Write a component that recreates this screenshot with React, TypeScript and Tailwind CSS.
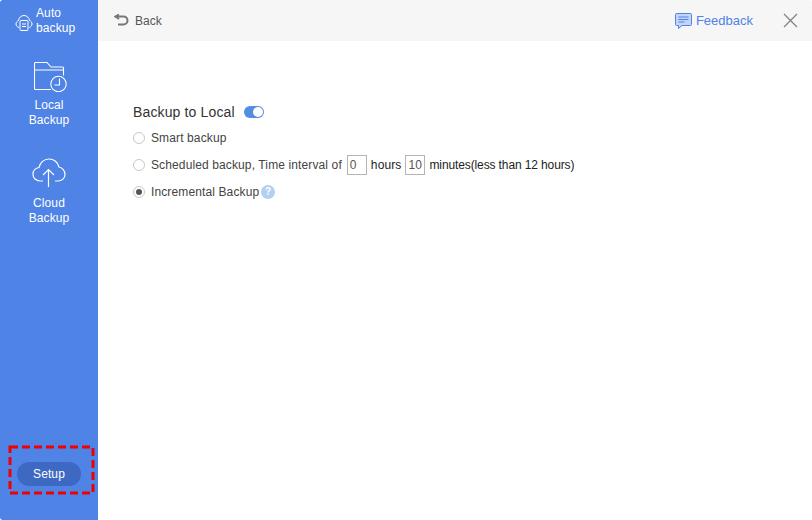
const font = "font-['Liberation_Sans',Arial,sans-serif]"

function AutoIcon() {
	return (
		<svg width="18" height="18" viewBox="0 0 18 18" fill="none" stroke="#fff" strokeWidth="1">
			<path d="M4 14.500C2 14 1 12.500 1 11 1 9.300 2.200 8 3.500 7.600 3.900 4.500 6.200 2.500 9 2.500c2.800 0 5 2 5.500 5 1.500.5 2.500 1.800 2.500 3.500 0 1.500-1 3-2.700 3.500" />
			<rect x="5" y="7.500" width="8" height="10" rx="1" />
			<path d="M7 11h4M7 13.500h4" />
		</svg>
	)
}

function FolderClockIcon() {
	return (
		<svg width="33" height="30" viewBox="0 0 33 30" fill="none" stroke="#fff" strokeWidth="1.100">
			<path d="M17 27.500H1.500a1 1 0 0 1-1-1V1.500a1 1 0 0 1 1-1h11.500l4 4.500h11.500a1 1 0 0 1 1 1v7.500" />
			<path d="M.5 8h29" />
			<circle cx="24.500" cy="22" r="7.700" />
			<path d="M25.500 16.500v6.500h-5" />
		</svg>
	)
}

function CloudUpIcon() {
	return (
		<svg width="34" height="29" viewBox="0 0 34 29" fill="none" stroke="#fff" strokeWidth="1.200">
			<path d="M11 23H8C4 23 1 20 1 16.300c0-3.500 2.600-6.300 6-6.800C8 4.500 12 1 17 1c5 0 9 3.500 10 8 3.400.5 6 3.800 6 7.500 0 3.700-3 6.500-7 6.500h-3" />
			<path d="M16.500 29V11.500M11 17l5.500-5.500L22 17" />
		</svg>
	)
}

function FeedbackIcon() {
	return (
		<svg width="17" height="16" viewBox="0 0 17 16" fill="none">
			<path d="M1.500.5h14a1 1 0 0 1 1 1v10a1 1 0 0 1-1 1H7l-3.500 3v-3H1.500a1 1 0 0 1-1-1v-10a1 1 0 0 1 1-1z" fill="#c3d5f7" stroke="#4f83e6" />
			<path d="M3.500 4h10M3.500 6.500h10M3.500 9h6" stroke="#4f83e6" />
		</svg>
	)
}

function Radio({ checked = false }: { checked?: boolean }) {
	return (
		<span className="flex h-3 w-3 shrink-0 items-center justify-center rounded-full border border-[#c8c8c8] bg-white">
			{checked && <span className="h-1.5 w-1.5 rounded-full bg-[#555]" />}
		</span>
	)
}

function NumBox({ value }: { value: string }) {
	return (
		<span className="flex h-5 w-5 items-center border border-[#b4b4b4] pl-[2px] text-xs text-[#555]">{value}</span>
	)
}

export default function App() {
	return (
		<div className={`relative flex h-[520px] w-[812px] overflow-hidden rounded-[3px] bg-white ${font}`}>
			{/* Sidebar */}
			<aside className="flex w-[98px] shrink-0 flex-col items-center bg-[#4f83e6] text-xs tracking-[0.1px] text-white">
				<div className="flex h-[42px] w-full items-center pl-[15px]">
					<span className="mt-[2px]">
						<AutoIcon />
					</span>
					<span className="ml-[3px] leading-[15px]">
						Auto
						<br />
						backup
					</span>
				</div>
				<div className="mt-[20px] flex flex-col items-center">
					<span className="ml-[3px]">
						<FolderClockIcon />
					</span>
					<span className="mt-[6px] text-center leading-[15px]">
						Local
						<br />
						Backup
					</span>
				</div>
				<div className="mt-[30px] flex flex-col items-center">
					<span className="ml-[1px]">
						<CloudUpIcon />
					</span>
					<span className="mt-[9px] text-center leading-[15px]">
						Cloud
						<br />
						Backup
					</span>
				</div>
				<button className="mt-auto mb-[34px] h-6 w-16 rounded-full bg-[#3e69c3] text-xs text-white">Setup</button>
			</aside>

			{/* Main */}
			<main className="flex min-w-0 flex-1 flex-col">
				<header className="flex h-[41px] items-center bg-[#f6f6f6] pl-[16px] pr-[14px]">
					<svg width="15" height="13" viewBox="0 0 15 13" fill="none" stroke="#777" strokeWidth="2">
						<path d="M1.500 2.500h8a3.800 3.800 0 0 1 0 8H4" />
						<path d="M5 .5 1.500 2.500 5 5" />
					</svg>
					<span className="ml-[6px] text-xs text-[#555]">Back</span>
					<div className="ml-auto flex items-center">
						<FeedbackIcon />
						<span className="ml-[4px] text-[13px] text-[#4f83e6]">Feedback</span>
						<svg className="ml-[30px]" width="15" height="15" viewBox="0 0 15 15" stroke="#808080" strokeWidth="1.200">
							<path d="M1 1l13 13M14 1 1 14" />
						</svg>
					</div>
				</header>

				<section className="pl-[35px] pt-[62px] text-xs tracking-[0.12px] text-[#444]">
					<div className="flex h-[18px] items-center">
						<span className="text-sm tracking-[0.14px] text-[#333]">Backup to Local</span>
						<span className="ml-[9px] flex h-[12px] w-[20px] items-center justify-end rounded-full bg-[#4f8fe6] pr-[1px]">
							<span className="h-[10px] w-[10px] rounded-full bg-white" />
						</span>
					</div>
					<div className="mt-[8px] flex h-[18px] items-center">
						<Radio />
						<span className="ml-[6px]">Smart backup</span>
					</div>
					<div className="mt-[7px] flex h-[22px] items-center">
						<Radio />
						<span className="ml-[6px]">Scheduled backup, Time interval of</span>
						<span className="ml-[5px]">
							<NumBox value="0" />
						</span>
						<span className="mx-[4px] text-[#222]">hours</span>
						<NumBox value="10" />
						<span className="ml-[4px] tracking-[-0.12px] text-[#222]">minutes(less than 12 hours)</span>
					</div>
					<div className="mt-[7px] flex h-[18px] items-center">
						<Radio checked />
						<span className="ml-[6px]">Incremental Backup</span>
						<span className="ml-[2px] flex h-[14px] w-[14px] items-center justify-center rounded-full bg-[#b3d0f2] text-[10px] font-bold text-white">?</span>
					</div>
				</section>
			</main>

			{/* Red dashed annotation */}
			<svg className="absolute left-[8px] top-[445px]" width="87" height="50" viewBox="0 0 87 50" fill="none">
				<rect x="2" y="2" width="83" height="46" stroke="#f00000" strokeWidth="3" strokeDasharray="8 4" />
			</svg>
		</div>
	)
}
